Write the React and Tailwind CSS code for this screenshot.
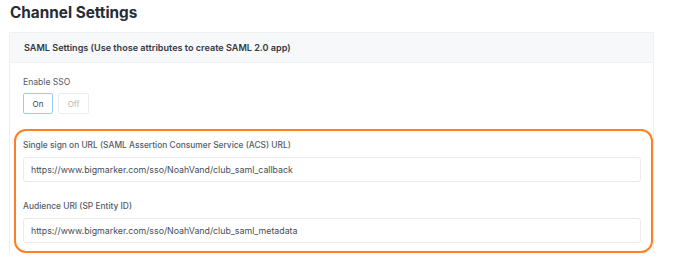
import React from "react";

const font = { fontFamily: "Inter, 'Open Sans', sans-serif" };

const Field = ({ label, value, className = "" }) => (
  <div className={className}>
    <div className="text-[8.4px] leading-[14px] text-[#555b66] font-medium">{label}</div>
    <div className="mt-[5px] h-[25px] mr-[10px] flex items-center px-[7px] rounded-[3px] border border-[#ececef] bg-white text-[8.8px] text-[#484d58]">
      {value}
    </div>
  </div>
);

const App = () => {
  return (
    <div className="w-[688px] h-[267px] bg-white overflow-hidden" style={font}>
      <h1 className="pl-[10px] pt-[1px] text-[15.3px] leading-[24px] font-bold text-[#262b36]">
        Channel Settings
      </h1>

      <div className="mt-[7px] ml-[9px] w-[645px] border border-b-0 border-[#eef0f3]">
        <div className="h-[30px] flex items-center px-[14px] bg-[#f7f8fa] border-b border-[#eef0f3] text-[9.1px] font-semibold text-[#343945]">
          SAML Settings (Use those attributes to create SAML 2.0 app)
        </div>

        <div className="pt-[12px] pl-[4px]">
          <div className="pl-[9px] text-[8.6px] leading-[14px] text-[#555b66]">Enable SSO</div>
          <div className="pl-[9px] mt-[4px] flex gap-[5px]">
            <button className="w-[30px] h-[21px] rounded-[2px] border border-[#9ccaf2] bg-white text-[8px] text-[#3a3f4a]">
              On
            </button>
            <button className="w-[31px] h-[21px] rounded-[2px] border border-[#ececec] bg-white text-[8px] text-[#b5b5b5]">
              Off
            </button>
          </div>

          <div className="mt-[15px] rounded-[12px] border-2 border-[#ff7f27] pl-[7px] pt-[7px] pb-[8px]">
            <Field
              label="Single sign on URL (SAML Assertion Consumer Service (ACS) URL)"
              value="https://www.bigmarker.com/sso/NoahVand/club_saml_callback"
            />
            <Field
              className="mt-[17px]"
              label="Audience URI (SP Entity ID)"
              value="https://www.bigmarker.com/sso/NoahVand/club_saml_metadata"
            />
          </div>
        </div>
      </div>
    </div>
  );
};

export default App;
